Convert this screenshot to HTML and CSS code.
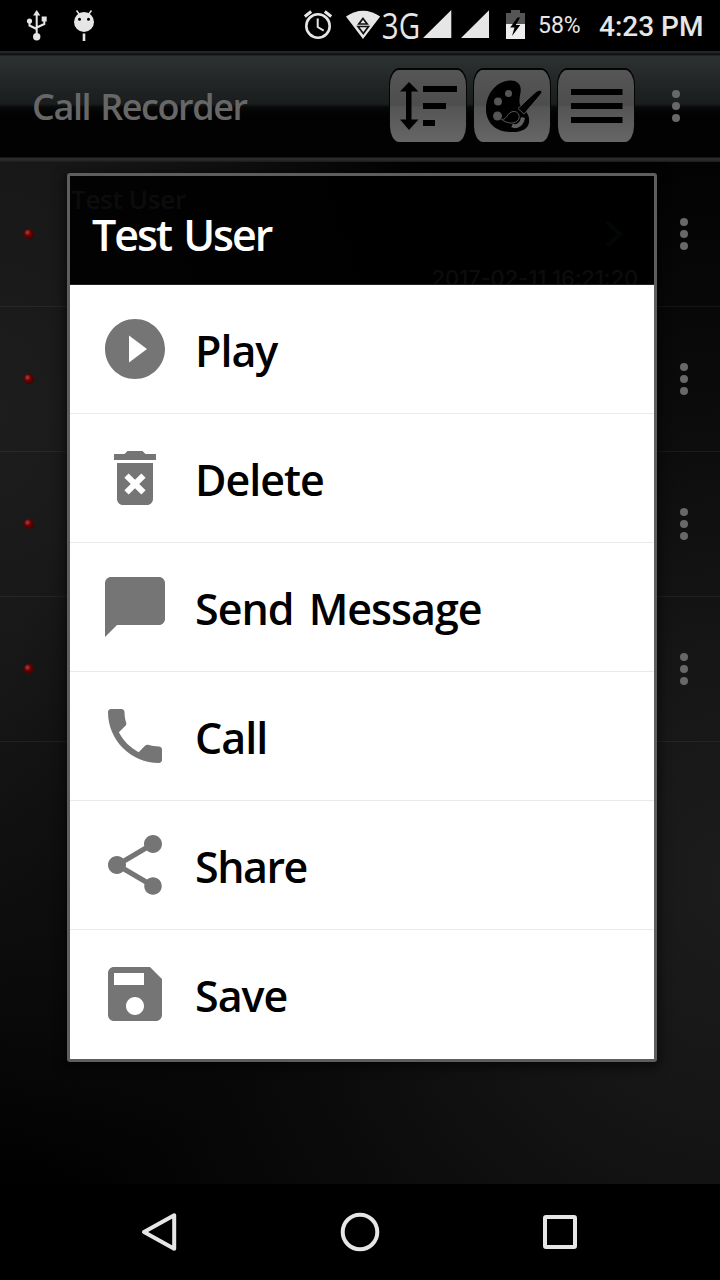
FILE: index.html
```html
<!DOCTYPE html>
<html lang="en">
<head>
<meta charset="utf-8">
<title>Call Recorder</title>
<link rel="stylesheet" href="styles.css">
</head>
<body>
<div class="phone">
  <header class="status">
    <svg class="st-usb" width="22" height="34" viewBox="26 8 22 34"><g fill="none" stroke="#e6e6e6" stroke-width="2"><path d="M36.700 14v22M29.500 21v4.500l7.200 3.500M44.300 19v5l-7.500 3.500"/></g><g fill="#e6e6e6"><path d="M36.700 10l3.600 5.500h-7.200z"/><circle cx="36.700" cy="36.700" r="3.700"/><circle cx="29.500" cy="21" r="2.600"/><path d="M41.700 16.500h5v5h-5z"/></g></svg>
    <svg class="st-bot" width="22" height="34" viewBox="73 8 22 34"><path d="M76.500 10.500l3 4M91.500 10.500l-3 4" stroke="#e6e6e6" stroke-width="1.500"/><circle cx="84" cy="22" r="10" fill="#e6e6e6"/><circle cx="79.500" cy="19.300" r="1.500"/><circle cx="88.500" cy="19.300" r="1.500"/><path d="M84 33.500v7.500" stroke="#e6e6e6" stroke-width="2.600"/></svg>
    <svg class="st-alarm" width="30" height="34" viewBox="303 8 30 34"><g fill="none" stroke="#e6e6e6"><circle cx="318" cy="26" r="11.700" stroke-width="2.600"/><path d="M317.700 18.500v8.500l6 3.700" stroke-width="2"/><path d="M304.800 16.500l6.400-5M331.200 16.500l-6.400-5" stroke-width="3"/></g></svg>
    <svg class="st-wifi" width="36" height="34" viewBox="345 8 36 34"><path d="M346 16.500Q363 5 380.200 16.500L363 39z" fill="#e6e6e6"/><path d="M363 18.500l4.200 5.500h-8.400zM358 26.500h10.500l-5.200 7z" fill="none" stroke="#111" stroke-width="1.700"/></svg>
    <span class="st-net">3G</span>
    <svg class="st-sig" width="66" height="34" viewBox="423 8 66 34"><path d="M423 38L451.300 10v28zM461 38L489.300 10v28z" fill="#e6e6e6"/></svg>
    <svg class="st-bat" width="20" height="34" viewBox="506 8 20 34"><path d="M506 13h5v-3h9v3h5v11h-19z" fill="#555"/><path d="M506 24h19v15h-19z" fill="#eee"/><path d="M517.500 17.500l-7.300 10h4.300l-2.500 8.500 8.300-11h-4.500l4.300-7.500z"/></svg>
    <span class="st-pct">58%</span>
    <span class="st-time">4:23 PM</span>
  </header>

  <div class="appbar">
    <h1 class="app-title">Call Recorder</h1>
    <div class="tools">
      <span class="tool"><svg width="76" height="72" viewBox="389 70 76 72"><path d="M399 91.500l9-9.500 9.500 9.500h-7v28h7l-9.500 10.500-9-10.500h6v-28zM422 86h34v6h-34zM422 103h23v6h-23zM422 120h12v6h-12z"/></svg></span>
      <span class="tool"><svg width="76" height="72" viewBox="473 70 76 72"><path d="M509 80.500c7-.5 12 4 10.500 12-1 6-2 11 .5 14 5 5 9 8 8 16-1 7-9 10-18 9.500-15 0-25-9-25-23 0-16 11-28 24-28.500z"/><g class="hole"><circle cx="507.500" cy="93.500" r="3.500"/><circle cx="497" cy="101.500" r="4"/><circle cx="496.500" cy="116" r="4.500"/></g><path d="M511 125.500c5 2 10-1 11-8" class="curve"/><path d="M517 108.500l16-15c4-3.500 6.500-4 7.500-2.500s-.5 3-3 6L523 114z" class="brush"/><path d="M500.500 119.500c6 0 5.500-7 11.500-8 5-.5 7.500 4 5.500 8-3 5-11 4.500-17 0z" class="brush"/></svg></span>
      <span class="tool"><svg width="76" height="72" viewBox="557 70 76 72"><path d="M570 89h51.500v6H570zM570 103h51.500v6H570zM570 117h51.500v6H570z"/></svg></span>
    </div>
    <span class="dots"><i></i><i></i><i></i></span>
  </div>

  <main class="list">
    <section class="row"><i class="led"></i>
      <div class="call">
        <span class="call-name">Test User</span>
        <svg class="chev" width="20" height="28" viewBox="0 0 20 28"><path d="M3 2l13 12L3 26"/></svg>
        <span class="call-date">2017-02-11 16:21:20</span>
      </div>
      <span class="dots"><i></i><i></i><i></i></span></section>
    <section class="row"><i class="led"></i><span class="dots"><i></i><i></i><i></i></span></section>
    <section class="row"><i class="led"></i><span class="dots"><i></i><i></i><i></i></span></section>
    <section class="row"><i class="led"></i><span class="dots"><i></i><i></i><i></i></span></section>
  </main>

  <nav class="navbar">
    <svg width="40" height="42" viewBox="0 0 40 42"><path d="M34.200 4.300v33.400L4 21z"/></svg>
    <svg width="42" height="42" viewBox="0 0 42 42"><circle cx="21" cy="21" r="17.300"/></svg>
    <svg width="40" height="42" viewBox="0 0 40 42"><rect x="5" y="6" width="30" height="30" rx="1"/></svg>
  </nav>

  <div class="dialog" role="dialog">
    <div class="dialog-head"><h2 class="dialog-title">Test User</h2></div>
    <ul class="menu">
      <li class="item"><svg class="icon" viewBox="0 0 24 24"><path d="M12 2C6.480 2 2 6.480 2 12s4.480 10 10 10 10-4.480 10-10S17.520 2 12 2zm-2 14.500v-9l6 4.500-6 4.500z"/></svg><span class="label">Play</span></li>
      <li class="item"><svg class="icon" viewBox="0 0 24 24"><path d="M6 19c0 1.100.9 2 2 2h8c1.100 0 2-.9 2-2V7H6v12zm2.460-7.120l1.410-1.410L12 12.590l2.120-2.120 1.410 1.410L13.410 14l2.120 2.120-1.410 1.410L12 15.410l-2.120 2.120-1.410-1.410L10.590 14l-2.130-2.120zM15.500 4l-1-1h-5l-1 1H5v2h14V4z"/></svg><span class="label">Delete</span></li>
      <li class="item"><svg class="icon" viewBox="0 0 24 24"><path d="M20 2H4c-1.100 0-2 .9-2 2v18l4-4h14c1.100 0 2-.9 2-2V4c0-1.100-.9-2-2-2z"/></svg><span class="label">Send Message</span></li>
      <li class="item"><svg class="icon" viewBox="0 0 24 24"><path d="M6.620 10.790c1.440 2.830 3.760 5.140 6.590 6.590l2.200-2.200c.27-.27.67-.36 1.020-.24 1.120.37 2.330.57 3.570.57.55 0 1 .45 1 1V20c0 .55-.45 1-1 1-9.390 0-17-7.610-17-17 0-.55.45-1 1-1h3.500c.55 0 1 .45 1 1 0 1.250.2 2.450.57 3.570.11.35.03.74-.25 1.020l-2.200 2.200z"/></svg><span class="label">Call</span></li>
      <li class="item"><svg class="icon" viewBox="0 0 24 24"><path d="M18 16.080c-.76 0-1.440.3-1.960.77L8.910 12.700c.05-.23.09-.46.09-.7s-.04-.47-.09-.7l7.050-4.110c.54.5 1.250.81 2.040.81 1.660 0 3-1.340 3-3s-1.340-3-3-3-3 1.340-3 3c0 .24.04.47.09.7L8.040 9.810C7.500 9.310 6.790 9 6 9c-1.660 0-3 1.340-3 3s1.340 3 3 3c.79 0 1.500-.31 2.040-.81l7.120 4.160c-.05.21-.08.43-.08.65 0 1.610 1.310 2.920 2.920 2.920 1.610 0 2.920-1.310 2.920-2.920s-1.310-2.920-2.920-2.920z"/></svg><span class="label tight">Share</span></li>
      <li class="item"><svg class="icon" viewBox="0 0 24 24"><path d="M17 3H5c-1.110 0-2 .9-2 2v14c0 1.100.89 2 2 2h14c1.100 0 2-.9 2-2V7l-4-4zm-5 16c-1.660 0-3-1.340-3-3s1.340-3 3-3 3 1.340 3 3-1.340 3-3 3zm3-10H5V5h10v4z"/></svg><span class="label">Save</span></li>
    </ul>
  </div>
</div>
</body>
</html>
```
FILE: styles.css
```css
* { box-sizing: border-box; }
body { margin: 0; background: #000; }
svg { display: block; flex: none; }

.phone {
  position: relative;
  display: flex;
  flex-direction: column;
  width: 720px;
  height: 1280px;
  overflow: hidden;
  font-family: "Open Sans", "Noto Sans", sans-serif;
}

.status {
  display: flex;
  align-items: center;
  height: 51px;
  padding: 0 0 1px 26px;
  color: #e6e6e6;
  white-space: nowrap;
}
.st-bot { margin-left: 25px; }
.st-alarm { margin-left: 208px; }
.st-wifi { margin-left: 12px; }
.st-net { width: 42px; font: 400 36px/50px "Open Sans", sans-serif; transform: scaleX(.82); transform-origin: 0 50%; padding: 1px 0 0 1px; }
.st-bat { margin-left: 17px; }
.st-pct { width: 62px; padding: 2px 0 0 12px; font: 400 23px/50px Roboto, sans-serif; }
.st-time { padding: 3px 0 0 11px; font: 500 28px/50px Roboto, sans-serif; }

.appbar {
  display: flex;
  align-items: center;
  height: 111px;
  padding: 0 0 1px 32px;
  background: linear-gradient(#252628 0 2px, #111414 2px 4px, #2d3132 5px, #1a1d1e 53px, #080909 56px, #020202 63px, #020202 106px, #2a2a2a 107px 109px, #1c1c1c 111px);
}
.app-title { margin: 0; padding-top: 2px; width: 358px; color: #676767; font-size: 36px; font-weight: 600; line-height: 48px; letter-spacing: -1.400px; word-spacing: 2px; white-space: nowrap; }
.tools { display: flex; gap: 8px; }
.tool {
  display: block;
  width: 76px;
  height: 72px;
  border-radius: 9px / 16px;
  background: linear-gradient(#565656, #4d4d4d 49%, #555 51%, #666);
  box-shadow: 0 -1px 0 1px #050505;
}
.hole { fill: #555; }
.brush { stroke: #555; stroke-width: 1; }
.curve { fill: none; stroke: #606060; stroke-width: 4; }

.dots { display: flex; flex-direction: column; gap: 4px; }
.dots i { width: 8px; height: 8px; border-radius: 50%; background: #686868; }
.appbar .dots { margin-left: 38px; }

.list {
  flex: 1;
  background:
    radial-gradient(ellipse 760px 800px at 740px 720px, #1c1c1c 0, #161616 28%, #0b0b0b 60%, transparent 100%),
    radial-gradient(ellipse 460px 780px at 0 250px, #1d1d1d 0, #171717 35%, #0a0a0a 75%, transparent 100%),
    #000;
}
.row { display: flex; align-items: center; justify-content: space-between; height: 145px; padding: 0 32px 0 24px; border-bottom: 1px solid rgba(255, 255, 255, .055); }
.led { width: 10px; height: 10px; border-radius: 50%; background: radial-gradient(circle at 35% 35%, #a03030 0 10%, #680000 35%, #4c0000 65%, #160404); }
.call { display: flex; flex-direction: column; align-items: flex-end; width: 570px; height: 144px; color: #777; white-space: nowrap; }
.call-name { align-self: flex-start; margin-left: -1px; padding-top: 19px; font-size: 26px; font-weight: 600; line-height: 36px; letter-spacing: -.3px; }
.chev { margin: 3px 18px 0 0; fill: none; stroke: #1c4a2c; stroke-width: 4; }
.call-date { margin: 13px 4px 0 0; font: 500 22px/34px Inter, sans-serif; letter-spacing: -.1px; }

.navbar { display: flex; justify-content: space-between; align-items: center; height: 96px; padding: 0 140px; background: #000; }
.navbar svg { fill: none; stroke: #e6e6e6; stroke-width: 4; stroke-linejoin: round; }

.dialog {
  position: absolute;
  left: 67px;
  top: 173px;
  width: 590px;
  height: 889px;
  border: 3px solid #5e5e5e;
  border-radius: 3px;
  box-shadow: 0 3px 12px 2px rgba(0, 0, 0, .6);
}
.dialog-head { height: 109px; padding: 29px 0 0 22px; background: rgba(0, 0, 0, .9); border-bottom: 1px solid #222; }
.dialog-title { margin: 0; color: #fff; font-size: 43px; font-weight: 600; line-height: 60px; white-space: nowrap; letter-spacing: -2px; word-spacing: 3px; }
.menu { margin: 0; padding: 0; list-style: none; background: #fff; }
.item { display: flex; align-items: center; height: 129px; padding-left: 29px; border-bottom: 1px solid #e9e9e9; }
.item:last-child { border-bottom-color: #fff; }
.icon { width: 72px; height: 72px; fill: #757575; }
.label { margin-left: 24px; padding-top: 3px; color: #000; font-size: 43px; font-weight: 600; line-height: 60px; white-space: nowrap; letter-spacing: -1px; word-spacing: 5px; }
.tight { letter-spacing: -1.500px; }
```
